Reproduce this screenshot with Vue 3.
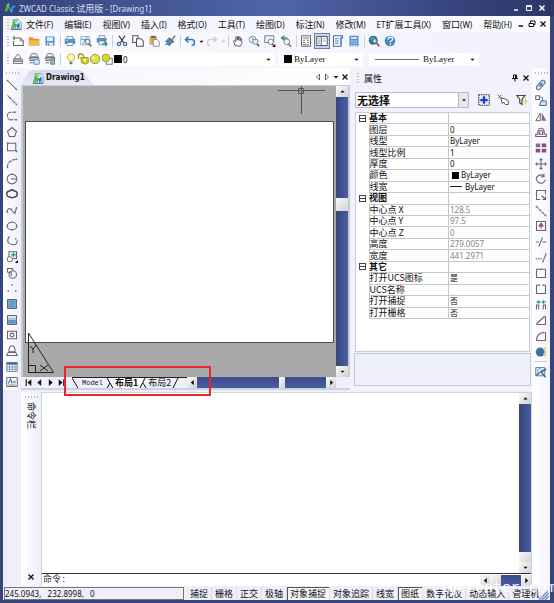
<script setup>
import { ref } from 'vue'

const g = 'fill="none" stroke="#666" stroke-width="1.4"'
const p = 'fill="none" stroke="#8a4a8a" stroke-width="1.5"'
const b = 'fill="#3f7fbf"'
const icons = {
  logo: '<path d="M1 12 4 3l3 1-3 9z" fill="#4db848"/><path d="M3 4 7 1v4z" fill="#8fd14f"/><path d="M6 6l4 7 2-7h3" fill="none" stroke="#3ea0e8" stroke-width="2"/>',
  doc: '<path d="M4 2h7l4 4v9H4z" fill="#d4ecf8" stroke="#5b9abf"/><path d="M1 14 5 3l3 1-3 10z" fill="#58b947"/><path d="M4 5 9 0l1 6z" fill="#9bd648"/><path d="M7 13V9h2l1 3 2-5v6" fill="none" stroke="#2676a8" stroke-width="1.6"/><path d="M1 15h14" stroke="#3c6b80" stroke-width="1.5"/>',
  new: '<path d="M5 4h6l4 4v6H2V8" fill="#fff" stroke="#666" stroke-width="1.4"/><path d="M11 4v4h4" fill="none" stroke="#666"/><path d="M3 1v6M0 4h6" stroke="#3a9a72" stroke-width="1.6"/>',
  open: '<path d="M1 3h5l2 2h7v9H1z" fill="#d99a32"/><path d="M2 7h13v7H1z" fill="#f0ba58"/>',
  save: '<path d="M2 2h12v12H2z" fill="#4d8fc9"/><path d="M4 3h8v5H4zM4 10h8v4H4z" fill="#e8f2fb"/><path d="M5 11h2v3H5z" fill="#4d8fc9"/>',
  print: '<path d="M4 2h8v4H4z" fill="#fff" stroke="#58809e"/><path d="M1 5h14v7H1z" fill="#5c91bd"/><path d="M4 10h8v4H4z" fill="#fff" stroke="#58809e"/><path d="M3 7h2" stroke="#fff"/>',
  preview: '<path d="M1 2h12v11H1z" fill="#eef6fc" stroke="#7ba6c4"/><path d="M3 4l6 6M10 2 3 13M1 6h9" stroke="#6ba5ce" stroke-width="1.2"/><circle cx="10" cy="9" r="3.3" fill="#dfeffa" stroke="#666" stroke-width="1.3"/><path d="M12 12l3 3" stroke="#555" stroke-width="1.8"/>',
  publish: '<path d="M4 1h8v4H4z" fill="#fff" stroke="#58809e"/><path d="M1 4h13v6H1z" fill="#5c91bd"/><path d="M4 8h7v5H4z" fill="#fff" stroke="#58809e"/><path d="M8 11h4V8l4 4-4 4v-3H8z" fill="#3b9b82"/>',
  cut: '<path d="M4 1l6 9M12 1 6 10" stroke="#333" stroke-width="1.7"/><circle cx="4" cy="12" r="2.2" fill="none" stroke="#336f9f" stroke-width="1.7"/><circle cx="12" cy="12" r="2.2" fill="none" stroke="#336f9f" stroke-width="1.7"/>',
  copy: '<path d="M1 1h7v9H1z" fill="#fff" stroke="#555" stroke-width="1.4"/><path d="M6 5h6l3 3v7H6z" fill="#fff" stroke="#555" stroke-width="1.4"/>',
  paste: '<path d="M2 2h10v11H2z" fill="#e7a85a"/><path d="M4 1h6v3H4z" fill="#666"/><path d="M7 6h5l3 3v6H7z" fill="#fff" stroke="#5b7890"/>',
  match: '<path d="M15 1l-5 6" stroke="#888" stroke-width="2.500"/><path d="M7 3l7 6-3 2-6-6z" fill="#5d6f80"/><path d="M5 5l6 6-4 4-2-2-4 1 3-4-3-1z" fill="#4e86b0"/>',
  undo: '<path d="M6 2 2 6l4 4M2 6h8q4 0 4 4t-4 4" fill="none" stroke="#2f76c0" stroke-width="2"/>',
  redo: '<path d="M10 2l4 4-4 4M14 6H6q-4 0-4 4t4 4" fill="none" stroke="#d0d0dc" stroke-width="1.8"/>',
  pan: '<path d="M4 14 2 8l1-1 2 2V3h2v4-5h2v5-4h2v5-3h2v6l-2 4z" fill="#fff" stroke="#555" stroke-width="1.2"/>',
  zoomrt: '<circle cx="6" cy="6" r="4.5" fill="#edf6fc" stroke="#7197b7" stroke-width="1.3"/><path d="M6 3v3h2" fill="none" stroke="#487"/><circle cx="10" cy="9" r="3.5" fill="#e2f0fb" stroke="#777" stroke-width="1.2"/><path d="M12 12l3 3" stroke="#555" stroke-width="2"/>',
  zoomwin: '<path d="M1 1h12v9H1z" fill="#e8f3fa" stroke="#657f91" stroke-width="1.3"/><circle cx="9" cy="9" r="3.5" fill="#fff" stroke="#777" stroke-width="1.2"/><path d="M11 12l2 2" stroke="#555" stroke-width="2"/><path d="M15 12v4h-4z" fill="#000"/>',
  zoomprev: '<path d="M6 1 2 4l4 3M2 4h8" fill="none" stroke="#3d9970" stroke-width="2"/><circle cx="9" cy="9" r="3.8" fill="#fff" stroke="#777" stroke-width="1.3"/><path d="M11 12l4 4" stroke="#777" stroke-width="2"/>',
  sheet: '<path d="M2 1h12v14H2z" fill="#fff" stroke="#666" stroke-width="1.3"/><path d="M4 4h8M4 7h3M9 7h3M4 10h3M9 10h3M4 13h8" stroke="#777" stroke-width="1.4"/>',
  props: '<path d="M1 2h14v12H1z" fill="#fff" stroke="#555" stroke-width="1.3"/><path d="M7 2v12M3 5h2M3 8h2M3 11h2" stroke="#666" stroke-width="1.4"/><path d="M9 5h4M9 8h4" stroke="#6d93c3"/>',
  palette: '<path d="M2 1h12v3h-2v11H2z" fill="#f5fbff" stroke="#466f91" stroke-width="1.4"/><path d="M12 2v12M4 5h5M4 8h5M4 11h5" stroke="#4b83b4" stroke-width="1.3"/>',
  calc: '<path d="M2 1h12v14H2z" fill="#5c8dcc"/><path d="M4 3h8v2H4z" fill="#fff"/><path d="M4 8h8M4 11h8M4 14h8" stroke="#dce9fb" stroke-width="1.5" stroke-dasharray="2 1"/>',
  globe: '<circle cx="7" cy="7" r="6" fill="#2f6fb0"/><path d="M2 5l5-3 3 3-4 3z" fill="#45ad61"/><circle cx="9" cy="8" r="3" fill="#a7d6ef" stroke="#555"/><path d="M11 10l4 5" stroke="#a44" stroke-width="2.4"/>',
  help: '<circle cx="8" cy="8" r="7" fill="#4788bd"/><path d="M5.500 6q0-3 3-3t3 2.500q0 1.500-2 2.500-1 .6-1 2" fill="none" stroke="#fff" stroke-width="1.7"/><circle cx="8.500" cy="12.500" r="1.100" fill="#fff"/>',
  layer1: '<path d="M5 5q1-4 4-3l3 6H3z" fill="#fff" stroke="#777" stroke-width="1.300"/><path d="M2 8h12v3H2zM2 11h12v3H2z" fill="#f5f5f5" stroke="#777" stroke-width="1.3"/><path d="M3 9h9" stroke="#4d90b8"/>',
  layer2: '<path d="M5 1h6l2 4H3z" fill="#fff" stroke="#777" stroke-width="1.3"/><path d="M2 6h12v2H2zM2 10h6M2 13h5" fill="#fff" stroke="#777" stroke-width="1.4"/><path d="M8 9h7v6H8z" fill="#d7ecfb" stroke="#5597c9" stroke-width="1.3"/>',
  layer3: '<path d="M5 1h6l2 4H3z" fill="#fff" stroke="#777" stroke-width="1.3"/><path d="M2 6h12v2H2zM2 10h6M2 13h5" fill="#fff" stroke="#777" stroke-width="1.4"/><path d="M9 8h5v7H9z" fill="#86b5d9" stroke="#666"/>',
  bulb: '<path d="M6 11Q3 8 3 5.500 4 1 8 1t5 4.500Q13 8 10 11z" fill="#fff9a8" stroke="#a79b35"/><path d="M6 12h4v3H6z" fill="#777"/>',
  lock: '<path d="M2 8V4q0-3 3-3t4 4" fill="none" stroke="#9a9820" stroke-width="2"/><path d="M5 6h10v7l-4 2-5-2z" fill="#d4d12a" stroke="#87851c"/><path d="M9 8h3v3H9z" fill="#fff9a0"/>',
  sun: '<circle cx="8" cy="8" r="6.300" fill="#ece02a" stroke="#5a9a90" stroke-width="1.200"/><circle cx="6" cy="6" r="2" fill="#fff79c"/>',
  sunvp: '<path d="M7 7h8v8H7z" fill="#fff" stroke="#5c8a8a" stroke-width="1.4"/><circle cx="6.500" cy="6.500" r="5.200" fill="#ddd42f" stroke="#8b8b3a"/>',
  line: `<path d="M2 2l12 12" ${g}/><path d="M1 1h2v2H1zM13 13h2v2h-2z" ${b}/>`,
  xline: `<path d="M2 2l12 12" ${g} stroke-dasharray="3 1"/><path d="M4 4h2v2H4zM10 10h2v2h-2zM13 13h2v2h-2z" ${b}/>`,
  pline: `<path d="M12 3H6Q2 3 2 8q0 5 4 5h8" ${g} stroke-dasharray="4 1"/><path d="M13 12h2v2h-2zM5 12h2v2H5zM11 2h2v2h-2z" ${b}/>`,
  polygon: `<path d="M8 2l6 5-2.500 7h-7L2 7z" ${g}/>`,
  rect: `<path d="M2 3h11v10H2z" ${g}/><path d="M1 2h2v2H1zM13 12h2v3h-2z" ${b}/>`,
  arc: `<path d="M2 14Q2 4 14 3" ${g} stroke-dasharray="5 1"/><path d="M1 13h2v2H1zM5 5h2v2H5zM13 2h2v2h-2z" ${b}/>`,
  circle: `<circle cx="8" cy="8" r="6.500" ${g}/><path d="M7 8h7" stroke="#3f7fbf" stroke-width="1.600"/>`,
  cloud: '<path d="M5 4q3-3 6 0 4 0 4 4t-4 4q-3 2-5 0-5 0-5-4t4-4z" fill="none" stroke="#444" stroke-width="1.900"/>',
  spline: `<path d="M1 11Q3 3 7 8t5 3 2-6" ${g}/><path d="M1 10h2v2H1zM6 6h2v2H6zM11 11h2v2h-2zM13 4h2v2h-2z" ${b}/>`,
  ellipse: `<ellipse cx="8" cy="8" rx="6.500" ry="5" ${g}/><path d="M7 2h2v2H7zM1 7h2v2H1zM13 7h2v2h-2zM7 12h2v2H7z" ${b}/>`,
  earc: `<path d="M4 3Q1 7 3 10t7 3 5-6" ${g}/><path d="M3 2h2v2H3zM12 4h2v2h-2z" ${b}/>`,
  insert: `<path d="M4 1h10v9H4z" ${g}/><circle cx="5" cy="11" r="3.500" fill="#fff" stroke="#666" stroke-width="1.300"/><path d="M7 5h6M10 2v6" stroke="#329364" stroke-width="1.700"/><path d="M16 12v4h-4z" fill="#000"/>`,
  block: `<path d="M2 7V2h7v3" ${g}/><circle cx="9" cy="10" r="5" ${g}/><path d="M2 7h5v5" ${g}/>`,
  point: `<path d="M7 3h2v2H7zM2 11h2v2H2zM12 11h2v2h-2z" ${b}/>`,
  hatch: '<path d="M2 2h12v12H2z" fill="#72a9d6" stroke="#666" stroke-width="1.300"/><path d="M4 4l8 8M12 4l-8 8M8 3l5 5M3 8l5 5" stroke="#4b86ba"/>',
  gradient: '<path d="M2 2h12v12H2z" fill="#a9cbe8" stroke="#666" stroke-width="1.300"/><path d="M3 8h10v5H3z" fill="#5c96c9"/><path d="M3 3h10v2H3z" fill="#e5f1fa"/>',
  region: `<path d="M2 3h12v10H2z" ${g}/><circle cx="8" cy="8" r="2.500" ${g}/>`,
  mass: `<path d="M4 9V6q1-5 4-5t4 5v3zM3 10h10l2 4H1z" ${g}/>`,
  table: '<path d="M1 2h14v12H1z" fill="#fff" stroke="#44688c"/><path d="M1 2h14v3H1z" fill="#3e6fa3"/><path d="M1 8h14M1 11h14M5 5v9M8.500 5v9M12 5v9" stroke="#6688a8"/>',
  mtext: '<path d="M1 2h14v12H1z" fill="#fff" stroke="#666" stroke-width="1.300"/><path d="M3 10l3-6 2 6" fill="none" stroke="#3978b2" stroke-width="1.500"/><path d="M9 7h4M9 9h4M3 12h10" stroke="#555"/>',
  erase: '<path d="M2 10 9 2q3-1 4 1t0 3l-7 8q-3 1-4-1z" fill="#d8e4f0" stroke="#58799b" stroke-width="1.500"/><path d="M5 10l5-5M6 6l4 4" stroke="#58799b" stroke-width="1.500"/>',
  copyobj: `<path d="M1 1h5v5H1z" ${g}/><path d="M8 8h7v6H6z" fill="#cfe2f5" stroke="#3d6fa5" stroke-width="1.300"/><path d="M7 3h3v4M8 6l2 2 2-2" fill="none" stroke="#3d6fa5"/>`,
  mirror: '<path d="M1 13h6V3z" fill="none" stroke="#666" stroke-width="1.300"/><path d="M9 13h6L9 2z" fill="#9a5c95"/>',
  offset: `<path d="M1 14h14v-3h-3q1-8-4-8T4 11H1z" ${p}/><path d="M6 11q-1-5 2-5t2 5z" ${g}/>`,
  array: '<path d="M1 2h6v5H1z" fill="#777"/><path d="M9 2h6v5H9zM1 9h6v5H1zM9 9h6v5H9z" fill="#8c4c88"/>',
  move: `<path d="M8 1v14M1 8h14M6 3l2-2 2 2M6 13l2 2 2-2M3 6 1 8l2 2M13 6l2 2-2 2" ${g}/>`,
  rotate: `<path d="M12 4Q8 1 4 4t-1 7q3 4 8 2l3-4M12 1v4H8" ${g}/>`,
  scale: `<path d="M14 7V2H2v12h5" ${g}/><path d="M9 9l5 5M14 10v4h-4" ${p}/>`,
  stretch: `<path d="M2 2l12 12" ${g} stroke-dasharray="4 1"/><path d="M1 1h2v2H1zM13 13h2v2h-2z" fill="#8c4c88"/>`,
  lengthen: `<path d="M2 2h12v12H2z" ${g}/><path d="M8 12V6M5 8l3-4 3 4z" fill="#8c4c88" stroke="#8c4c88" stroke-width="1.400"/>`,
  trim: `<path d="M1 8h4M10 8h5" ${g}/><path d="M10 2 5 14" ${g}/>`,
  extend: `<path d="M1 9h8" ${g} stroke-dasharray="2 1"/><path d="M15 2l-5 12" ${g}/>`,
  breakpt: `<path d="M2 3h12v11H2z" ${g}/><path d="M7 2h2v2H7z" ${b}/>`,
  break: `<path d="M5 3H2v11h12V3h-3" ${g}/><path d="M5 2h2v2H5zM10 2h2v2h-2z" ${b}/>`,
  join: `<path d="M2 14V8h3v6M11 14V8h3v6" ${g}/><path d="M1 4h5M15 4h-5M4 2l3 2-3 2zM12 2 9 4l3 2z" fill="#359a77" stroke="#359a77"/>`,
  chamfer: `<path d="M2 14h12V3" ${g}/><path d="M2 13 13 3" ${p}/>`,
  fillet: `<path d="M2 14h12V3" ${g}/><path d="M2 14Q2 4 13 3" ${p}/>`,
  explode: '<circle cx="7" cy="8" r="6" fill="#3b73a6"/><path d="M11 5l4-3M12 8h4M11 10l4 3" stroke="#e7b73e" stroke-width="1.500"/>',
  edit: '<path d="M1 2h12v11H1z" fill="#dcecf8" stroke="#5589b5" stroke-width="1.300"/><circle cx="6" cy="6" r="2.500" fill="#fff" stroke="#5589b5"/><path d="M1 13l5-4M15 4 8 8l6 7" fill="none" stroke="#35648c" stroke-width="2"/>',
  pick: '<path d="M1 1h14v14H1z" fill="none" stroke="#333" stroke-width="1.500" stroke-dasharray="2 1"/><path d="M4 4h8v8H4z" fill="#cfe0ff"/><path d="M8 3v10M3 8h10" stroke="#1140d8" stroke-width="3"/>',
  select: '<path d="M5 5l2 8 2-2 2 3h4V9l-3-2z" fill="#fff" stroke="#555" stroke-width="1.300"/><path d="M1 1l5 5M6 1 1 6" stroke="#b03030" stroke-width="1.200"/>',
  filter: '<path d="M1 2h11L8 7v7l-3-2V7z" fill="#fff" stroke="#444" stroke-width="1.600"/><path d="M14 5l-4 5h3l-2 5 5-6h-3z" fill="#f0d020"/>',
  caret: '<path d="M3 6h10l-5 5z" fill="#111"/>',
  caretoff: '<path d="M4 6h8l-4 4z" fill="#bbb"/>',
  up: '<path d="M3 10h10L8 5z" fill="#111"/>',
  left: '<path d="M11 2v12L4 8z" fill="#111"/>',
  right: '<path d="M5 2v12l7-6z" fill="#111"/>',
  first: '<path d="M13 2v12L6 8z" fill="#111"/><path d="M4 2v12" stroke="#111" stroke-width="2"/>',
  last: '<path d="M3 2v12l7-6z" fill="#111"/><path d="M12 2v12" stroke="#111" stroke-width="2"/>',
  prevo: '<path d="M11 2v12L5 8z" fill="#fff" stroke="#333" stroke-width="1.500"/>',
  nexto: '<path d="M5 2v12l6-6z" fill="#fff" stroke="#333" stroke-width="1.500"/>',
  close: '<path d="M3 3l10 10M13 3 3 13" stroke="#111" stroke-width="2.600"/>',
  closew: '<path d="M3 3l10 10M13 3 3 13" stroke="#fff" stroke-width="3"/>',
  maxw: '<path d="M3 4h10v9H3z" fill="none" stroke="#fff" stroke-width="2"/><path d="M2 4h12" stroke="#fff" stroke-width="3"/>',
  minw: '<path d="M4 12h8" stroke="#fff" stroke-width="3"/>',
  min: '<path d="M3 12h9" stroke="#111" stroke-width="3"/>',
  restore: '<path d="M5 6V2h9v7h-3M2 7h9v6H2z" fill="none" stroke="#111" stroke-width="2"/>',
  pin: '<path d="M5 9V2h6v7M2 9h12M8 9v6M9 2v7" fill="none" stroke="#111" stroke-width="2"/>'
}
const Icon = (props) => h('svg', { viewBox: '0 0 16 16', class: 'ico', innerHTML: icons[props.n], 'aria-hidden': 'true' })
Icon.props = ['n']

const menus = [['', '文件', '(F)'], ['', '编辑', '(E)'], ['', '视图', '(V)'], ['', '插入', '(I)'], ['', '格式', '(O)'], ['', '工具', '(T)'], ['', '绘图', '(D)'], ['', '标注', '(N)'], ['', '修改', '(M)'], ['ET', '扩展工具', '(X)'], ['', '窗口', '(W)'], ['', '帮助', '(H)']]
const standard = ['new', 'open', 'save', '|', 'print', 'preview', 'publish', '|', 'cut', 'copy', 'paste', 'match', '|', 'undo', 'caret', 'redo', 'caretoff', '|', 'pan', 'zoomrt', 'zoomwin', 'zoomprev', '|', 'sheet', 'props', 'palette', 'calc', '|', 'globe', 'help']
const drawTools = ['line', 'xline', 'pline', 'polygon', 'rect', 'arc', 'circle', 'cloud', 'spline', 'ellipse', 'earc', 'insert', 'block', 'point', 'hatch', 'gradient', 'region', 'mass', 'table', 'mtext']
const editTools = ['erase', 'copyobj', 'mirror', 'offset', 'array', 'move', 'rotate', 'scale', 'stretch', 'lengthen', 'trim', 'extend', 'breakpt', 'break', 'join', 'chamfer', 'fillet', 'explode', '|', 'edit']
const groups = [
  { name: '基本', rows: [['图层', '0'], ['线型', 'ByLayer'], ['线型比例', '1'], ['厚度', '0'], ['颜色', 'ByLayer', 'swatch'], ['线宽', 'ByLayer', 'stroke']] },
  { name: '视图', muted: true, rows: [['中心点 X', '128.5'], ['中心点 Y', '97.5'], ['中心点 Z', '0'], ['高度', '279.0057'], ['宽度', '441.2971']] },
  { name: '其它', rows: [['打开UCS图标', '是'], ['UCS名称', ''], ['打开捕捉', '否'], ['打开栅格', '否']] }
]
const modes = ref([['捕捉', 0], ['栅格', 0], ['正交', 0], ['极轴', 0], ['对象捕捉', 1], ['对象追踪', 0], ['线宽', 0], ['图纸', 1], ['数字化仪', 0], ['动态输入', 0], ['管理机', 0]])
const command = ref('')
</script>

<script>
import { h } from 'vue'
</script>

<template>
  <div class="window">
    <header class="title">
      <Icon n="logo" />
      <h1><span class="lat">ZWCAD Classic</span> 试用版 <span class="lat">- [Drawing1]</span></h1>
      <button><Icon n="minw" /></button><button><Icon n="maxw" /></button><button><Icon n="closew" /></button>
    </header>

    <div class="body">
      <nav class="menu">
        <i class="vgrip"></i>
        <Icon n="doc" class="docicon" />
        <button v-for="m in menus" :key="m[1]" class="menuitem"><span v-if="m[0]" class="lat">{{ m[0] }}</span>{{ m[1] }}<span class="lat">{{ m[2] }}</span></button>
        <span class="mdi"><button><Icon n="min" /></button><button><Icon n="restore" /></button><button><Icon n="close" /></button></span>
      </nav>

      <div class="bar">
        <i class="vgrip"></i>
        <template v-for="(t, i) in standard" :key="i">
          <i v-if="t === '|'" class="vsep"></i>
          <button v-else class="tool" :class="{ narrow: t.startsWith('caret'), on: t === 'props' }"><Icon :n="t" /></button>
        </template>
      </div>

      <div class="bar layers">
        <i class="vgrip"></i>
        <button class="tool"><Icon n="layer1" /></button><button class="tool"><Icon n="layer2" /></button><button class="tool"><Icon n="layer3" /></button>
        <i class="vsep"></i>
        <label class="combo layer">
          <Icon n="bulb" /><Icon n="lock" /><Icon n="sun" /><Icon n="sunvp" /><i class="swatch"></i>
          <select><option>0</option></select><Icon n="caret" class="drop" />
        </label>
        <label class="combo color"><i class="swatch"></i><select><option>ByLayer</option></select><Icon n="caret" class="drop" /></label>
        <label class="combo ltype"><i class="sample"></i><select><option>ByLayer</option></select><Icon n="caret" class="drop" /></label>
      </div>

      <main class="work">
        <aside class="tools left">
          <i class="hgrip"></i>
          <button v-for="t in drawTools" :key="t"><Icon :n="t" /></button>
        </aside>

        <section class="drawing">
          <div class="doctabs">
            <button class="doctab"><Icon n="doc" />Drawing1</button>
            <span class="docctl"><button><Icon n="prevo" /></button><button><Icon n="nexto" /></button><button><Icon n="caret" /></button><button><Icon n="close" /></button></span>
          </div>
          <div class="view">
            <div class="canvas">
              <div class="paper"></div>
              <svg class="cross" width="47" height="28" viewBox="0 0 47 28"><path d="M0 4.500h47M23.500 0v28M20.500 2.500h5v5h-5z" fill="none" stroke="#555" /></svg>
              <svg class="ucs" width="27" height="42" viewBox="0 0 27 42"><path d="M.5 1v39.500h25zM.5 33.500h7v7M2 14l3 3 3-4M5 17v4M12 33l8 6M20 33l-8 6" fill="none" stroke="#222" /></svg>
            </div>
            <div class="vscroll"><button><Icon n="up" /></button><i class="track t1"></i><i class="thumb"></i><i class="track t2"></i><button><Icon n="caret" /></button></div>
          </div>
          <div class="sheets">
            <button class="nav"><Icon n="first" /></button><button class="nav"><Icon n="left" /></button><button class="nav"><Icon n="right" /></button><button class="nav"><Icon n="last" /></button>
            <div class="tabs">
              <svg width="7" height="12" viewBox="0 0 7 12"><path d="M0 1l6 10" fill="none" stroke="#111" /></svg>
              <button class="sheet mono">Model</button>
              <svg width="8" height="12" viewBox="0 0 8 12"><path d="M1 1h7v11z" fill="#fff" /><path d="M1 1l6 10M4 6l-3 5" fill="none" stroke="#111" /></svg>
              <button class="sheet active">布局1</button>
              <svg width="8" height="12" viewBox="0 0 8 12"><path d="M0 1h6L1 12H0z" fill="#fff" /><path d="M6 1 1 11M4 6l3 5" fill="none" stroke="#111" /></svg>
              <button class="sheet">布局2</button>
              <svg width="8" height="12" viewBox="0 0 8 12"><path d="M6 1 1 11" fill="none" stroke="#111" /></svg>
            </div>
            <div class="hscroll"><button><Icon n="left" /></button><i class="track h1t"></i><i class="thumb"></i><i class="track"></i><button><Icon n="right" /></button></div>
          </div>
        </section>

        <section class="props">
          <div class="phead"><i class="vgrip"></i><h2>属性</h2><button><Icon n="pin" /></button><button><Icon n="close" /></button></div>
          <div class="psel">
            <label><select><option>无选择</option></select><b><Icon n="caret" /></b></label>
            <button><Icon n="pick" /></button><button><Icon n="select" /></button><button><Icon n="filter" /></button>
          </div>
          <div class="plist">
            <table>
              <tbody v-for="gr in groups" :key="gr.name">
                <tr class="cat"><td class="tog"><i class="minus"></i></td><th>{{ gr.name }}</th><td></td></tr>
                <tr v-for="r in gr.rows" :key="r[0]">
                  <td class="tog"></td><th>{{ r[0] }}</th>
                  <td class="val" :class="{ muted: gr.muted }"><i v-if="r[2]" :class="'k-' + r[2]"></i>{{ r[1] }}</td>
                </tr>
              </tbody>
            </table>
          </div>
          <div class="pdesc"></div>
        </section>

        <aside class="tools right">
          <i class="hgrip"></i>
          <template v-for="t in editTools" :key="t">
            <i v-if="t === '|'" class="hsep"></i>
            <button v-else><Icon :n="t" /></button>
          </template>
        </aside>

        <section class="cmd">
          <div class="cmdside"><i class="hgrip"></i><span class="vtext">命令栏</span><button><Icon n="close" /></button></div>
          <div class="cmdmain">
            <div class="log">
              <div class="vscroll"><button><Icon n="up" /></button><i class="track"></i><i class="thumb"></i><button><Icon n="caret" /></button></div>
            </div>
            <div class="prompt">
              <label for="cmdline">命令:</label><input id="cmdline" v-model="command" />
              <div class="hscroll"><button><Icon n="left" /></button><i class="thumb"></i><i class="track"></i><button><Icon n="right" /></button></div>
            </div>
          </div>
        </section>
        <div class="redbox"></div>
      </main>

      <footer class="status">
        <output>245.0943,&nbsp;&nbsp; 232.8998,&nbsp;&nbsp; 0</output>
        <button v-for="m in modes" :key="m[0]" :class="{ pressed: m[1] }" @click="m[1] = m[1] ? 0 : 1">{{ m[0] }}</button>
        <svg class="sizer" width="10" height="10" viewBox="0 0 10 10"><path d="M0 10 10 0M3 10l7-7M6 10l4-4" stroke="#6b7fb0" stroke-width="1.200" /></svg>
        <span class="mark">tigerenter.com</span>
      </footer>
    </div>
  </div>
</template>

<style>
body { margin: 0; }
</style>

<style scoped>
.window { box-sizing: border-box; min-height: 100vh; display: flex; flex-direction: column; padding: 0 4px 3px 3px; background: #36457b; color: #111; font: 9px/11px "Noto Sans CJK SC", sans-serif; overflow: hidden; }
.window button { display: flex; align-items: center; justify-content: center; padding: 0; margin: 0; border: 0; background: none; color: inherit; font: inherit; }
.ico { display: block; width: 12px; height: 12px; flex: none; }
.lat { font-family: "Noto Sans", sans-serif; font-size: 8px; }
select { appearance: none; border: 0; padding: 0; margin: 0; background: transparent; color: inherit; font: inherit; flex: 1; min-width: 0; outline: 0; }
h1, h2 { margin: 0; font: inherit; }

.title { display: flex; align-items: center; height: 16px; margin: 0 -4px 0 -3px; padding: 0 6px 0 4px; background: linear-gradient(90deg, #33437b, #5064a8 50%, #35427a 85%, #2c3765); color: #d8def0; }
.title h1 { flex: 1; padding-left: 3px; white-space: pre; }
.title button { width: 13px; }
.title button .ico { width: 8px; height: 8px; }

.body { flex: 1; display: flex; flex-direction: column; min-width: 0; background: #efeffb; }
.vgrip { width: 2px; height: 11px; flex: none; margin: 0 1px 0 4px; background: repeating-linear-gradient(#b8b8c8 0 1px, transparent 1px 3px); }
.hgrip { width: 13px; height: 2px; flex: none; background: repeating-linear-gradient(90deg, #b8b8c8 0 1px, transparent 1px 3px); }
.menu { display: flex; align-items: center; height: 16px; background: linear-gradient(90deg, #f2f2fb, #fafaff); }
.menu .docicon { margin: 0 4px 0 0; }
.window .menuitem { margin-right: 11px; white-space: nowrap; flex: none; }
.mdi { display: flex; margin-left: auto; padding-right: 2px; }
.mdi button { width: 11px; }
.mdi .ico { width: 8px; height: 8px; }
.window .menuitem:last-of-type { margin-right: 0; }

.bar { display: flex; align-items: center; height: 18px; background: linear-gradient(90deg, #fbfbff, #f1f1fd); }
.tool { width: 16px; height: 16px; flex: none; }
.tool.narrow { width: 6px; }
.tool.narrow .ico { width: 7px; height: 7px; }
.window .tool.on { background: #c6d1ea; box-shadow: inset 0 0 0 1px #6c7fb5; }
.vsep { width: 1px; height: 12px; flex: none; margin: 0 1px 0 2px; background: #cfcfdc; }
.combo { display: flex; align-items: center; box-sizing: border-box; height: 13px; background: #fff; font-family: "Liberation Serif", serif; font-size: 9px; }
.combo .drop { width: 7px; height: 7px; margin: 0 3px; }
.layer { width: 213px; padding-left: 3px; font-family: "Noto Sans", sans-serif; font-size: 8px; }
.swatch { width: 8px; height: 8px; margin-right: 2px; background: #000; flex: none; }
.layer .swatch { margin: 0 1px; }
.color { width: 84px; margin-left: 4px; padding-left: 5px; }
.ltype { width: 110px; margin-left: 6px; padding-left: 6px; }
.sample { width: 44px; height: 1px; margin-right: 4px; background: #776a6a; flex: none; }

.work { position: relative; flex: 1; display: grid; grid-template-columns: 18px minmax(0, 1fr) 181px 18px; grid-template-rows: 322px minmax(150px, 1fr); }
.tools { display: flex; flex-direction: column; align-items: center; background: linear-gradient(90deg, #fff, #efeffa); }
.tools button { flex: 1; }
.tools .hgrip { margin: 4px 0 3px; }
.left { grid-row: 1; }
.right { grid-column: 4; grid-row: 1 / 3; background: linear-gradient(90deg, #fff, #f4f4fd); }
.right button { flex: 0 1 16px; }
.right button:nth-of-type(3n) { flex-basis: 15px; }
.hsep { width: 12px; height: 1px; margin: 2px 0; background: #c8c8d8; }

.drawing { grid-column: 2; display: flex; flex-direction: column; min-width: 0; padding-right: 1px; }
.doctabs { display: flex; justify-content: space-between; align-items: flex-end; height: 17px; background: linear-gradient(90deg, #f4f4fc, #fff); }
.window .doctab { height: 15px; padding: 0 9px 0 11px; gap: 2px; clip-path: polygon(0 100%, 8px 10%, 12px 0, 58px 0, 62px 10%, 100% 100%); background: linear-gradient(#d6d9ec, #e6e8f5); font: bold 8px "DejaVu Sans Condensed", "DejaVu Sans", sans-serif; }
.docctl { display: flex; align-items: center; height: 17px; padding-right: 1px; }
.docctl button { width: 9px; }
.docctl .ico { width: 8px; height: 8px; }
.view { flex: 1; display: flex; border: solid #c5ced6; border-width: 1px 2px 0; }
.canvas { position: relative; flex: 1; display: flex; box-sizing: border-box; padding: 35px 2px 34px; background: #a9a9a9; }
.paper { flex: 1; background: #fff; border: 1px solid #4e504e; }
.cross { position: absolute; top: 0; right: 11px; }
.ucs { position: absolute; left: 5px; bottom: 3px; }
.vscroll { display: flex; flex-direction: column; width: 12px; }
.vscroll button, .hscroll button, .thumb { background: linear-gradient(135deg, #fafafa, #d2d2d4); flex: none; }
.window .vscroll button, .window .hscroll button { background: linear-gradient(135deg, #fafafa, #d2d2d4); }
.vscroll button { height: 11px; }
.vscroll .ico, .hscroll .ico { width: 7px; height: 7px; }
.vscroll .thumb { height: 13px; }
.track { background: linear-gradient(90deg, #36467e, #4a5d9f); flex: 1; }
.vscroll .t1 { flex: 100; }
.vscroll .t2 { flex: 153; }
.sheets { display: flex; height: 11px; padding-left: 2px; padding-right: 14px; border-bottom: 2px solid #cbd4dc; background: #f0f0fb; }
.nav { width: 11px; flex: none; }
.nav .ico { width: 9px; height: 9px; }
.tabs { display: flex; flex: none; align-items: center; margin-left: 5px; width: 115px; box-shadow: inset 0 1px #222; }
.tabs svg { flex: none; height: 12px; }
.window .sheet { height: 10px; margin-top: 1px; flex: none; padding: 0 1px; white-space: nowrap; line-height: 10px; }
.window .sheet.mono { font-family: "Liberation Mono", monospace; font-size: 7px; padding: 0 3px; }
.window .active { background: #fff; font-weight: bold; }
.hscroll { display: flex; flex: 1; height: 11px; }
.hscroll button { width: 10px; }
.hscroll .thumb { width: 6px; }
.hscroll .track { background: linear-gradient(#3c4c88, #4b5ea2); }
.hscroll .h1t { flex: 2; }

.props { grid-column: 3; display: flex; flex-direction: column; padding: 0 1px 4px 3px; background: #f2f2fc; }
.phead { display: flex; align-items: center; height: 20px; margin-left: -1px; }
.phead .vgrip { margin: 0 5px 0 4px; }
.phead h2 { flex: 1; }
.phead button { width: 11px; }
.phead .ico { width: 8px; height: 8px; }
.psel { display: flex; align-items: center; height: 24px; }
.psel label { display: flex; box-sizing: border-box; width: 117px; height: 16px; margin: 0 5px 0 1px; border: 1px solid #b6bfcb; background: #fff; font-size: 11px; font-weight: bold; }
.psel select { padding-left: 1px; }
.psel b { display: flex; align-items: center; justify-content: center; width: 9px; background: #e6e6ec; border-left: 1px solid #b6b6c0; }
.psel b .ico { width: 6px; height: 6px; }
.psel button { width: 19px; flex: none; }
.plist { flex: 1; background: #fff; border: 1px solid #c9cfd9; margin: 0 1px; }
.plist table { width: 100%; height: 206px; border-collapse: collapse; table-layout: fixed; line-height: 10px; }
.plist th, .plist td { padding: 0; height: 10px; border-bottom: 1px solid #c6c6c6; font-weight: normal; text-align: left; white-space: nowrap; }
.plist th { width: 79px; border-left: 1px solid #c6c6c6; border-right: 1px solid #c6c6c6; }
.plist .tog { width: 13px; border: 0; }
.plist .cat th { font-weight: bold; border-left: 0; }
.minus { display: block; box-sizing: border-box; width: 7px; height: 7px; margin: 0 auto; border: 1px solid #444; background: linear-gradient(#444, #444) center / 5px 1px no-repeat; }
.plist .val { padding-left: 1px; font-family: "Noto Sans", "Noto Sans CJK SC", sans-serif; font-size: 8px; }
.plist .muted { color: #858585; }
.k-swatch { display: inline-block; width: 7px; height: 7px; margin: 0 2px; background: #000; vertical-align: -1px; }
.k-stroke { display: inline-block; width: 12px; height: 1px; margin-right: 3px; background: #222; vertical-align: 3px; }
.pdesc { height: 31px; margin-top: 1px; border: 1px solid #c2ccd6; background: #efeffc; }

.cmd { grid-column: 2 / 4; display: flex; padding-top: 2px; min-width: 0; }
.cmdside { width: 20px; display: flex; flex-direction: column; align-items: center; background: linear-gradient(90deg, #fff, #efeffa); }
.cmdside .hgrip { margin: 4px 0; }
.vtext { flex: 1; writing-mode: vertical-rl; text-orientation: sideways; }
.cmdside button { height: 18px; }
.cmdside .ico { width: 8px; height: 8px; }
.cmdmain { flex: 1; display: flex; flex-direction: column; box-sizing: border-box; border: 1px solid #ccd5da; border-bottom: 0; background: #fff; min-width: 0; }
.log { flex: 1; display: flex; justify-content: flex-end; }
.log .thumb { height: 10px; }
.prompt { display: flex; align-items: center; height: 12px; padding-left: 1px; border-top: 1px solid #333; font-family: "Liberation Mono", "Noto Sans CJK SC", monospace; color: #333; }
.prompt input { flex: 1; min-width: 0; height: 10px; padding: 0 3px; border: 0; outline: 0; font: inherit; }
.prompt .hscroll { flex: none; width: 51px; }
.prompt .thumb { width: 11px; }
.redbox { position: absolute; left: 61px; top: 298px; width: 143px; height: 26px; border: 2px solid #e8262c; }

.status { position: relative; display: flex; align-items: center; height: 14px; padding: 0 1px; background: #efeffa; }
.status output { box-sizing: border-box; flex: none; width: 180px; height: 13px; margin-right: 3px; border: 1px solid #777; font: 8px/11px "Noto Sans", sans-serif; white-space: nowrap; }
.status button { box-sizing: border-box; height: 13px; padding: 0 3px; white-space: nowrap; flex: none; border-right: 1px solid #dcdce8; }
.status button:last-of-type { border: 0; padding-right: 0; }
.status .pressed { box-shadow: inset 1px 1px #555; background: #f6f6fd; }
.sizer { flex: none; align-self: flex-end; margin-left: auto; }
.mark { position: absolute; right: -6px; bottom: 3px; color: #fff; font: 15px/17px "Liberation Mono", monospace; pointer-events: none; }
</style>
